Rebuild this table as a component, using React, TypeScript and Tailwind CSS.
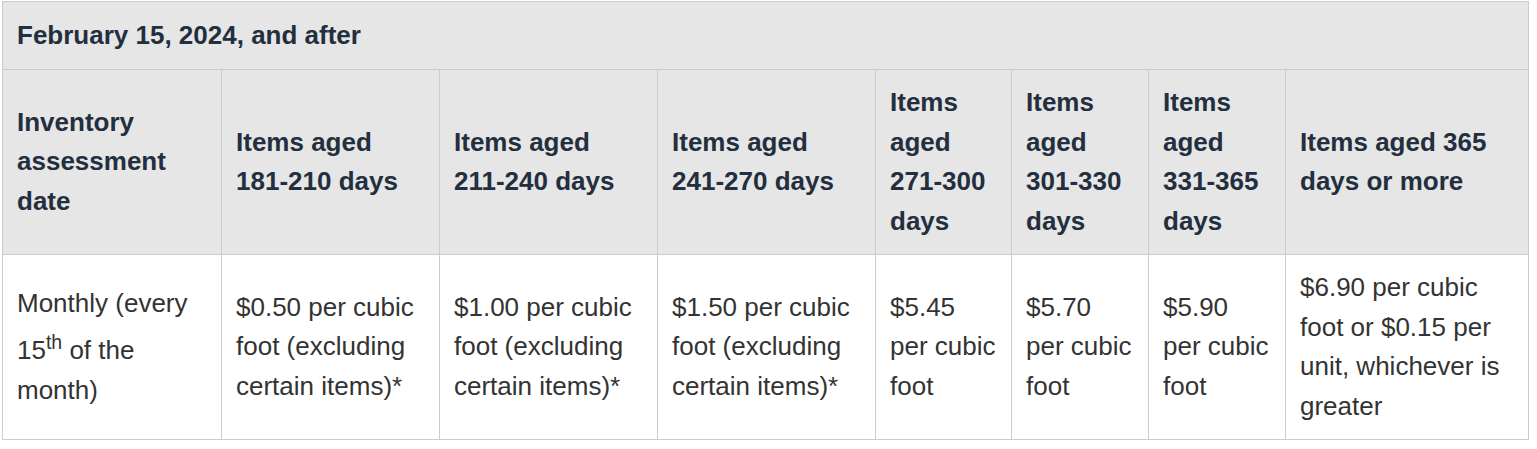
import React from "react";

const th = "border border-[#cccccc] bg-[#e6e6e6] text-left align-middle font-bold text-[#232f3e] pl-[14px] pr-[14px] py-[13px]";
const td = "border border-[#cccccc] bg-white text-left align-middle font-normal text-[#333333] pl-[14px] pr-[14px] py-[13px]";

export default function App() {
  const heads = [
    "Items aged 181-210 days",
    "Items aged 211-240 days",
    "Items aged 241-270 days",
    "Items aged 271-300 days",
    "Items aged 301-330 days",
    "Items aged 331-365 days",
    "Items aged 365 days or more",
  ];
  const cells = [
    "$0.50 per cubic foot (excluding certain items)*",
    "$1.00 per cubic foot (excluding certain items)*",
    "$1.50 per cubic foot (excluding certain items)*",
    "$5.45 per cubic foot",
    "$5.70 per cubic foot",
    "$5.90 per cubic foot",
    "$6.90 per cubic foot or $0.15 per unit, whichever is greater",
  ];
  const widths = [219, 218, 218, 218, 136, 137, 137, 243];
  return (
    <div className="min-h-[449px] w-[1537px] bg-white pt-[1px] pl-[2px]" style={{ fontFamily: '"Liberation Sans", Arial, sans-serif' }}>
      <table className="table-fixed border-collapse w-[1526px] text-[26px] leading-[39.5px]">
        <colgroup>
          {widths.map((w, i) => (
            <col key={i} style={{ width: w }} />
          ))}
        </colgroup>
        <thead>
          <tr className="h-[68px]">
            <th colSpan={8} className={th}>February 15, 2024, and after</th>
          </tr>
          <tr className="h-[184px]">
            <th className={th}>Inventory assessment date</th>
            {heads.map((h) => (
              <th key={h} className={th}>{h}</th>
            ))}
          </tr>
        </thead>
        <tbody>
          <tr className="h-[185px]">
            <td className={td}>
              Monthly (every 15<sup className="align-super static leading-[inherit] text-[75%]">th</sup> of the month)
            </td>
            {cells.map((c, i) => (
              <td key={i} className={td}>{c}</td>
            ))}
          </tr>
        </tbody>
      </table>
    </div>
  );
}
